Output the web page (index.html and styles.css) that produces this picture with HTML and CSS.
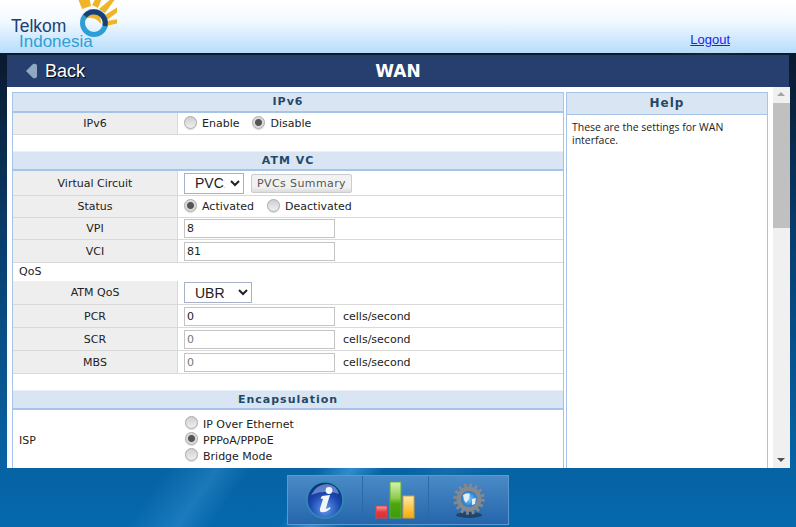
FILE: index.html
```html
<!DOCTYPE html>
<html lang="en">
<head>
  <meta charset="UTF-8">
  <title>WAN</title>
  <link rel="stylesheet" href="styles.css">
</head>
<body>
  <header class="header">
    <div class="logo">
      <svg class="logo-mark" width="76" height="42" viewBox="0 0 76 42">
        <g fill="#f0b429">
          <path d="M41 9 L36 -4 L48 -4 L50 6 Z"/>
          <path d="M51 5 L56 -4 L62 -4 L57 8 Z"/>
          <path d="M58 9 L71 -2 L75 -2 L64 13 Z"/>
          <path d="M64 15 L80 5 L82 8 L66 20 Z"/>
          <path d="M66 21 L78 19 L78 23 L65 26 Z"/>
          <path d="M48 9 Q60 10 60 24 Q52 14 43 20 Z"/>
        </g>
        <circle cx="53" cy="23" r="11.5" fill="none" stroke="#2d9fd6" stroke-width="5"/>
        <path d="M44 16 A11.5 11.5 0 0 1 64 26" fill="none" stroke="#1b3f73" stroke-width="5"/>
      </svg>
      <div class="logo-telkom">Telkom</div>
      <div class="logo-indonesia">Indonesia</div>
    </div>
    <a class="logout" href="#">Logout</a>
  </header>

  <div class="panel">
    <div class="titlebar">
      <a class="back" href="#">
        <svg width="12" height="16" viewBox="0 0 12 16"><path d="M0 8 L7 1 Q11 0 11 3 L11 13 Q11 16 7 15 Z" fill="#8fa9c4"/></svg>
        Back
      </a>
      <h1 class="title">WAN</h1>
      <span></span>
    </div>

    <div class="content">
      <div class="form">
        <div class="section">IPv6</div>
        <div class="row row-22">
          <div class="label">IPv6</div>
          <div class="value radios">
            <label><input class="radio" type="radio" name="ipv6">Enable</label>
            <label><input class="radio" type="radio" name="ipv6" checked>Disable</label>
          </div>
        </div>

        <div class="section section-gap">ATM VC</div>
        <div class="row row-25">
          <div class="label">Virtual Circuit</div>
          <div class="value">
            <select class="select pvc"><option>PVC1</option></select>
            <button class="btn">PVCs Summary</button>
          </div>
        </div>
        <div class="row row-22">
          <div class="label">Status</div>
          <div class="value radios">
            <label><input class="radio" type="radio" name="status" checked>Activated</label>
            <label><input class="radio" type="radio" name="status">Deactivated</label>
          </div>
        </div>
        <div class="row row-22">
          <div class="label">VPI</div>
          <div class="value"><input class="text" type="text" value="8"></div>
        </div>
        <div class="row row-23">
          <div class="label">VCI</div>
          <div class="value"><input class="text" type="text" value="81"></div>
        </div>
        <div class="plain-row">QoS</div>
        <div class="row row-24">
          <div class="label">ATM QoS</div>
          <div class="value"><select class="select ubr"><option>UBR</option></select></div>
        </div>
        <div class="row row-23">
          <div class="label">PCR</div>
          <div class="value"><input class="text" type="text" value="0"><span class="unit">cells/second</span></div>
        </div>
        <div class="row row-23">
          <div class="label">SCR</div>
          <div class="value"><input class="text muted" type="text" value="0"><span class="unit">cells/second</span></div>
        </div>
        <div class="row row-23">
          <div class="label">MBS</div>
          <div class="value"><input class="text muted" type="text" value="0"><span class="unit">cells/second</span></div>
        </div>

        <div class="section section-gap">Encapsulation</div>
        <div class="isp">
          <div class="isp-label">ISP</div>
          <div class="isp-options">
            <label><input class="radio" type="radio" name="isp">IP Over Ethernet</label>
            <label><input class="radio" type="radio" name="isp" checked>PPPoA/PPPoE</label>
            <label><input class="radio" type="radio" name="isp">Bridge Mode</label>
          </div>
        </div>
      </div>

      <aside class="help">
        <div class="help-title">Help</div>
        <p class="help-text">These are the settings for WAN interface.</p>
      </aside>

      <div class="scrollbar">
        <div class="arrow-up"></div>
        <div class="thumb"></div>
        <div class="arrow-down"></div>
      </div>
    </div>
  </div>

  <footer class="footer">
    <nav class="dock">
      <a class="dock-item dock-info" href="#">
        <svg width="40" height="40" viewBox="0 0 40 40">
          <defs>
            <radialGradient id="ball" cx="50%" cy="75%" r="70%">
              <stop offset="0" stop-color="#5f9be8"/>
              <stop offset="0.6" stop-color="#1c47b0"/>
              <stop offset="1" stop-color="#0f2c80"/>
            </radialGradient>
          </defs>
          <circle cx="20" cy="20" r="18" fill="url(#ball)" stroke="#2a8fb0" stroke-width="1.6"/>
          <path d="M6 15 Q12 4 22 4 Q32 5 34 14 Q20 9 6 15 Z" fill="#9cc0ee" opacity="0.55"/>
          <circle cx="24" cy="10.5" r="3.4" fill="#f2f6fd"/>
          <path d="M17 16 L25 15 L21 28 Q21 30 25 27 L25.500 28.500 Q20 33.500 16 32 Q14 31 15.500 27 L18 19 L15.500 18.500 Z" fill="#f2f6fd"/>
        </svg>
      </a>
      <a class="dock-item dock-stats" href="#">
        <svg width="42" height="38" viewBox="0 0 42 38">
          <defs>
            <linearGradient id="barRed" x1="0" y1="0" x2="0" y2="1"><stop offset="0" stop-color="#f5a0a0"/><stop offset="0.5" stop-color="#e43c3c"/><stop offset="1" stop-color="#d83030"/></linearGradient>
            <linearGradient id="barGreen" x1="0" y1="0" x2="0" y2="1"><stop offset="0" stop-color="#d8f4b0"/><stop offset="0.45" stop-color="#8ccb4a"/><stop offset="0.6" stop-color="#4ea60e"/><stop offset="1" stop-color="#3f9a08"/></linearGradient>
            <linearGradient id="barOrange" x1="0" y1="0" x2="0" y2="1"><stop offset="0" stop-color="#fdeab8"/><stop offset="0.5" stop-color="#fcc94a"/><stop offset="1" stop-color="#f8a90c"/></linearGradient>
          </defs>
          <rect x="1" y="25" width="11" height="12" fill="url(#barRed)" stroke="#d8454a"/>
          <rect x="15" y="1" width="11" height="36" fill="url(#barGreen)" stroke="#5fae35"/>
          <rect x="28" y="15" width="11" height="22" fill="url(#barOrange)" stroke="#d8a030"/>
        </svg>
      </a>
      <a class="dock-item dock-setup" href="#">
        <svg width="36" height="38" viewBox="0 0 36 38">
          <defs>
            <radialGradient id="globe" cx="50%" cy="50%" r="55%"><stop offset="0" stop-color="#7cc8f4"/><stop offset="1" stop-color="#1a72c8"/></radialGradient>
          </defs>
          <ellipse cx="18" cy="34" rx="13" ry="3" fill="#1a3550" opacity="0.7"/>
          <circle cx="18" cy="18" r="13.500" fill="none" stroke="#85888c" stroke-width="4.500" stroke-dasharray="2.600 2.700"/>
          <circle cx="18" cy="18" r="12.500" fill="#85888c"/>
          <circle cx="18" cy="18" r="8" fill="url(#globe)"/>
          <path d="M12 14 Q16 11 19 13 L18 18 L15 22 L13 19 Z M21 18 L25 17 L24 23 L21 24 Z" fill="#e6eef5"/>
        </svg>
      </a>
    </nav>
  </footer>
</body>
</html>
```

FILE: styles.css
```css
* {
  box-sizing: border-box;
}
html, body {
  height: 100%;
}
body {
  margin: 0;
  overflow: hidden;
  display: flex;
  flex-direction: column;
  font-family: "DejaVu Sans", Verdana, sans-serif;
  font-size: 11px;
  color: #222;
  background:
    linear-gradient(122deg, transparent 62%, rgba(255,255,255,0.06) 66%, transparent 70%),
    linear-gradient(to bottom, #0a1424 0, #0a1a30 60px, #083f6f 250px, #07609f 440px, #0568ad 527px);
}

/* header */
.header {
  height: 53px;
  flex: none;
  display: flex;
  justify-content: space-between;
  background: linear-gradient(to bottom, #fff 0, #f4faff 20px, #b6dcfb 53px);
}
.logo {
  position: relative;
  width: 120px;
  padding: 19px 0 0 11px;
  font-family: "Liberation Sans", Arial, sans-serif;
  line-height: 15px;
}
.logo-mark {
  position: absolute;
  left: 41px;
  top: 0;
}
.logo-telkom {
  position: relative;
  font-size: 17.500px;
  color: #1b3f73;
}
.logo-indonesia {
  position: relative;
  margin-left: 8px;
  font-size: 17px;
  color: #2d9fd6;
}
.logout {
  margin: 32px 66px 0 0;
  font-family: "Liberation Sans", Arial, sans-serif;
  font-size: 13px;
  color: #2222ee;
}

/* panel */
.panel {
  height: 413px;
  flex: none;
  margin: 2px 7px 0;
  display: flex;
  flex-direction: column;
  background: #fff;
}
.titlebar {
  height: 32px;
  flex: none;
  display: grid;
  grid-template-columns: 1fr auto 1fr;
  align-items: center;
  padding-left: 19px;
  padding-right: 19px;
  background: #263f6e;
}
.back {
  display: flex;
  align-items: center;
  gap: 7px;
  font-family: "Liberation Sans", Arial, sans-serif;
  font-size: 18px;
  color: #fff;
  text-decoration: none;
  text-shadow: 1px 1px 1px #000;
}
.title {
  margin: 0;
  font-size: 17px;
  font-weight: bold;
  color: #fff;
}
.content {
  flex: 1;
  min-height: 0;
  display: flex;
  padding: 5px 0 0 5px;
}

/* form */
.form {
  width: 552px;
  flex: none;
  overflow: hidden;
  border-left: 1px solid #a6c3e8;
  border-right: 1px solid #a6c3e8;
  border-top: 1px solid #a6c3e8;
}
.section {
  height: 20px;
  border-bottom: 2px solid #a6c3e8;
  background: #dae5f3;
  color: #1f4a68;
  font-weight: bold;
  letter-spacing: 1px;
  line-height: 18px;
  text-align: center;
}
.section-gap {
  margin-top: 16px;
  border-top: 1px solid #e9f0f8;
}
.row {
  display: flex;
  border-bottom: 1px solid #d9d9d9;
}
.row-22 { height: 22px; }
.row-23 { height: 23px; }
.row-24 { height: 24px; }
.row-25 { height: 25px; }
.row:last-of-type {
  border-bottom: 1px solid #d9d9d9;
}
.label {
  width: 165px;
  flex: none;
  display: flex;
  align-items: center;
  justify-content: center;
  border-right: 1px solid #d9d9d9;
  background: #eee;
}
.value {
  flex: 1;
  display: flex;
  align-items: center;
  padding-left: 6px;
  gap: 7px;
}
.radios {
  gap: 13px;
}
.radios label, .isp-options label {
  display: flex;
  align-items: center;
  gap: 5px;
}
.radio {
  appearance: none;
  width: 13px;
  height: 13px;
  margin: -3px 0 0;
  border: 1px solid #aaa;
  border-radius: 50%;
  background: linear-gradient(to bottom, #cfcfcf, #efefef);
  box-shadow: 0 1px 1px rgba(0,0,0,0.15);
}
.radio:checked {
  background: radial-gradient(circle, #555 0, #555 3px, #d8d8d8 4px, #e8e8e8 100%);
}
.select {
  height: 21px;
  padding: 0 2px 0 6px;
  border: 1px solid #a8b0c8;
  background: #fff;
  font-family: "Liberation Sans", Arial, sans-serif;
  font-size: 14px;
  color: #222;
}
.pvc {
  width: 60px;
}
.ubr {
  width: 68px;
}
.btn {
  height: 19px;
  padding: 0 5px;
  border: 1px solid #ccc;
  border-radius: 2px;
  background: linear-gradient(to bottom, #f2f2f2 70%, #dcdcdc);
  font-family: "DejaVu Sans", Verdana, sans-serif;
  font-size: 11px;
  letter-spacing: 0.4px;
  color: #555;
}
.text {
  width: 151px;
  height: 19px;
  padding: 0 2px;
  border: 1px solid #c4c4c4;
  font-family: "DejaVu Sans", Verdana, sans-serif;
  font-size: 11px;
  color: #222;
}
.muted {
  color: #777;
}
.unit {
  margin-left: 1px;
}
.plain-row {
  height: 18px;
  padding-left: 6px;
  line-height: 18px;
}
.isp {
  display: flex;
  align-items: center;
  height: 60px;
}
.isp-label {
  width: 166px;
  flex: none;
  padding-left: 6px;
}
.isp-options {
  display: flex;
  flex-direction: column;
  gap: 3px;
  padding-left: 6px;
}

/* help */
.help {
  width: 202px;
  flex: none;
  margin-left: 2px;
  border: 1px solid #a6c3e8;
  border-bottom: none;
}
.help-title {
  height: 22px;
  border-bottom: 1px solid #a6c3e8;
  background: #dae5f3;
  color: #1f4a68;
  font-size: 12px;
  font-weight: bold;
  letter-spacing: 1px;
  line-height: 21px;
  text-align: center;
}
.help-text {
  margin: 6px 5px;
  font-family: "Open Sans", Tahoma, sans-serif;
  font-size: 10.500px;
  line-height: 13px;
}

/* scrollbar */
.scrollbar {
  position: relative;
  width: 17px;
  flex: none;
  margin-left: 5px;
  margin-top: -5px;
  background: #f0f0f0;
}
.thumb {
  position: absolute;
  top: 16px;
  left: 0;
  width: 100%;
  height: 125px;
  background: #c0c0c0;
}
.arrow-up, .arrow-down {
  position: absolute;
  left: 4px;
  border-left: 4px solid transparent;
  border-right: 4px solid transparent;
}
.arrow-up {
  top: 5px;
  border-bottom: 4px solid #a3a3a3;
}
.arrow-down {
  bottom: 6px;
  border-top: 4px solid #505050;
}

/* dock */
.footer {
  flex: 1;
  display: flex;
  justify-content: center;
  padding: 7px 0 2px;
  background: linear-gradient(125deg, transparent 20%, rgba(90,180,240,0.25) 26%, transparent 30%, transparent 38%, rgba(90,180,240,0.5) 42%, transparent 46%);
}
.dock {
  display: flex;
  width: 222px;
  border: 1px solid #5d97cf;
  background: linear-gradient(to bottom, #4a8ac6, #2566ac);
}
.dock-item {
  display: flex;
  align-items: center;
  justify-content: center;
}
.dock-info {
  width: 75px;
  border-right: 1px solid #2d69a8;
}
.dock-stats {
  width: 66px;
  border-right: 1px solid #2d69a8;
}
.dock-setup {
  flex: 1;
}
```
